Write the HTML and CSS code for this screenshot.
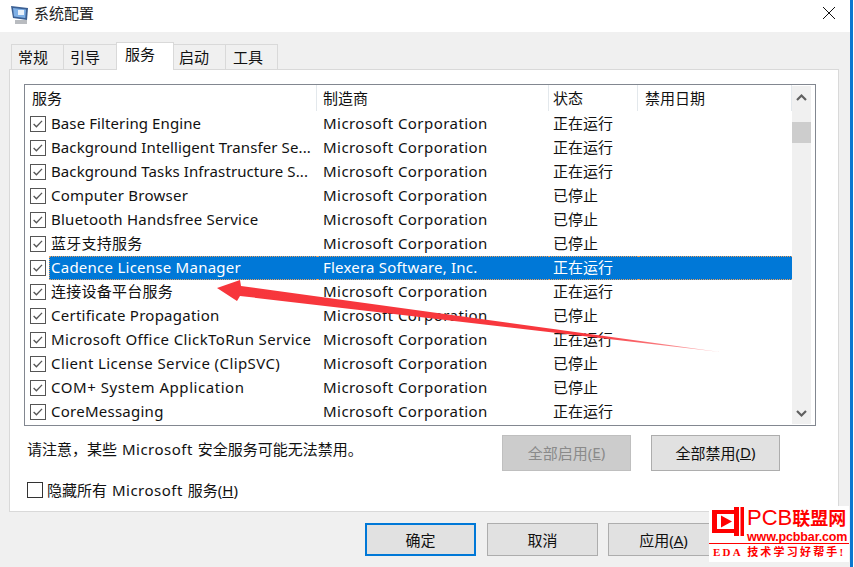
FILE: index.html
```html
<!DOCTYPE html>
<html lang="zh-CN">
<head>
<meta charset="utf-8">
<title>系统配置</title>
<link rel="stylesheet" href="styles.css">
</head>
<body>
<svg width="0" height="0" class="defs"><defs>
<symbol id="chk" viewBox="0 0 16 16"><path d="M3 8 L6.2 11.2 L12.6 4.4" fill="none" stroke="#555" stroke-width="1.5"/></symbol>
</defs></svg>
<div class="window">
  <header class="titlebar">
    <svg class="appicon" width="20" height="22" viewBox="0 0 20 22">
      <rect x="5" y="17" width="12" height="4" fill="#b9bcc0"/>
      <path d="M1 3 L18 5 L17 17 L3 15 Z" fill="#3b5f93"/>
      <path d="M3 5 L16 6.5 L15.3 15 L4 13.5 Z" fill="#7fb0e6"/>
      <rect x="8" y="7" width="6" height="5" fill="#e9f1fb"/>
    </svg>
    <span class="title">系统配置</span>
    <svg class="close" width="12" height="12" viewBox="0 0 12 12"><path d="M0 0 L12 12 M12 0 L0 12" stroke="#111" stroke-width="1" fill="none"/></svg>
  </header>
  <main class="content">
    <nav class="tabs">
      <span class="tab">常规</span>
      <span class="tab">引导</span>
      <span class="tab active">服务</span>
      <span class="tab">启动</span>
      <span class="tab">工具</span>
    </nav>
    <section class="panel">
      <div class="list">
        <div class="table">
          <div class="row head">
            <span class="hc hc1">服务</span><span class="hc hc2">制造商</span><span class="hc hc3">状态</span><span class="hc hc4">禁用日期</span>
          </div>
          <div class="row"><span class="box"><svg><use href="#chk"/></svg></span><span class="name narrow">Base Filtering Engine</span><span class="mfr">Microsoft Corporation</span><span class="st">正在运行</span><span class="dt"></span></div>
          <div class="row"><span class="box"><svg><use href="#chk"/></svg></span><span class="name tight">Background Intelligent Transfer Se...</span><span class="mfr">Microsoft Corporation</span><span class="st">正在运行</span><span class="dt"></span></div>
          <div class="row"><span class="box"><svg><use href="#chk"/></svg></span><span class="name tight">Background Tasks Infrastructure S...</span><span class="mfr">Microsoft Corporation</span><span class="st">正在运行</span><span class="dt"></span></div>
          <div class="row"><span class="box"><svg><use href="#chk"/></svg></span><span class="name">Computer Browser</span><span class="mfr">Microsoft Corporation</span><span class="st">已停止</span><span class="dt"></span></div>
          <div class="row"><span class="box"><svg><use href="#chk"/></svg></span><span class="name">Bluetooth Handsfree Service</span><span class="mfr">Microsoft Corporation</span><span class="st">已停止</span><span class="dt"></span></div>
          <div class="row"><span class="box"><svg><use href="#chk"/></svg></span><span class="name">蓝牙支持服务</span><span class="mfr">Microsoft Corporation</span><span class="st">已停止</span><span class="dt"></span></div>
          <div class="row selected"><span class="box"><svg><use href="#chk"/></svg></span><span class="name">Cadence License Manager</span><span class="mfr">Flexera Software, Inc.</span><span class="st">正在运行</span><span class="dt"></span></div>
          <div class="row"><span class="box"><svg><use href="#chk"/></svg></span><span class="name">连接设备平台服务</span><span class="mfr">Microsoft Corporation</span><span class="st">正在运行</span><span class="dt"></span></div>
          <div class="row"><span class="box"><svg><use href="#chk"/></svg></span><span class="name">Certificate Propagation</span><span class="mfr">Microsoft Corporation</span><span class="st">已停止</span><span class="dt"></span></div>
          <div class="row"><span class="box"><svg><use href="#chk"/></svg></span><span class="name wide">Microsoft Office ClickToRun Service</span><span class="mfr">Microsoft Corporation</span><span class="st">正在运行</span><span class="dt"></span></div>
          <div class="row"><span class="box"><svg><use href="#chk"/></svg></span><span class="name wide">Client License Service (ClipSVC)</span><span class="mfr">Microsoft Corporation</span><span class="st">已停止</span><span class="dt"></span></div>
          <div class="row"><span class="box"><svg><use href="#chk"/></svg></span><span class="name wider">COM+ System Application</span><span class="mfr">Microsoft Corporation</span><span class="st">已停止</span><span class="dt"></span></div>
          <div class="row"><span class="box"><svg><use href="#chk"/></svg></span><span class="name">CoreMessaging</span><span class="mfr">Microsoft Corporation</span><span class="st">正在运行</span><span class="dt"></span></div>
        </div>
        <div class="scrollbar">
          <svg class="arrow" width="19" height="22" viewBox="0 0 19 22"><path d="M5 14 L9.5 9.5 L14 14" fill="none" stroke="#606060" stroke-width="2.2"/></svg>
          <div class="track"><div class="thumb"></div></div>
          <svg class="arrow" width="19" height="22" viewBox="0 0 19 22"><path d="M5 9 L9.5 13.5 L14 9" fill="none" stroke="#606060" stroke-width="2.2"/></svg>
        </div>
      </div>
      <div class="notice">
        <span class="note">请注意，某些 <span class="latin">Microsoft</span> 安全服务可能无法禁用。</span>
        <div class="noticebtns">
          <span class="btn btn-wide disabled">全部启用(<u>E</u>)</span>
          <span class="btn btn-wide">全部禁用(<u>D</u>)</span>
        </div>
      </div>
      <label class="hide"><span class="box2"></span><span>隐藏所有 <span class="latin">Microsoft</span> 服务(<u>H</u>)</span></label>
    </section>
    <footer class="actions">
      <span class="btn btn-foot primary">确定</span>
      <span class="btn btn-foot">取消</span>
      <span class="btn btn-foot btn-last">应用(<u>A</u>)</span>
    </footer>
  </main>
</div>
<svg class="pointer" width="854" height="567" viewBox="0 0 854 567">
  <defs><linearGradient id="fade" x1="217" x2="720" y1="0" y2="0" gradientUnits="userSpaceOnUse">
    <stop offset="0" stop-color="#f7363c"/><stop offset="0.75" stop-color="#f8383e"/><stop offset="1" stop-color="#fbb6b8"/>
  </linearGradient></defs>
  <polygon points="217,288 240,280 241,286 720,352 240,296 237,301" fill="url(#fade)"/>
</svg>
<aside class="stamp">
  <div class="stamp-top">
    <svg class="stamp-logo" width="32" height="29" viewBox="0 0 32 29">
      <path d="M0 3 H22 V0 H27 V29 H22 V26 H0 Z M5 7 V22 H22 V7 Z" fill="#f00" fill-rule="evenodd"/>
      <rect x="28.5" y="0" width="3.5" height="29" fill="#f00"/>
      <path d="M9 8.5 L20 14.5 L9 20.5 Z" fill="#f00"/>
    </svg>
    <div class="stamp-name">
      <span class="stamp-big">PCB<span class="stamp-cjk">联盟网</span></span>
      <span class="stamp-url">www.pcbbar.com</span>
    </div>
  </div>
  <div class="stamp-slogan">EDA 技术学习好帮手!</div>
</aside>
</body>
</html>
```

FILE: styles.css
```css
* { box-sizing: border-box; }
html, body { margin: 0; padding: 0; background: #fff; }
body {
  width: 854px; height: 567px; overflow: hidden; position: relative;
  font-family: "Noto Sans", "Noto Sans CJK SC", sans-serif;
  font-size: 15px; color: #111;
}
.defs { position: absolute; }
.window {
  width: 853px; height: 567px;
  border-right: 3px solid #0a78d0;
  display: flex; flex-direction: column;
  background: #f0f0f0;
}
.titlebar {
  height: 32px; background: #fff;
  display: flex; align-items: center;
  padding: 0 15px 0 10px;
}
.appicon { margin-right: 4px; margin-top: -4px; }
.title { font-size: 15px; line-height: 20px; margin-top: -6px; color: #222; }
.close { margin-left: auto; margin-top: -6px; }
.content { flex: 1; display: flex; flex-direction: column; padding: 11px 0 0 9px; }
.tabs { display: flex; align-items: flex-end; height: 27px; padding-left: 2px; position: relative; z-index: 1; margin-bottom: -1px; }
.tab {
  width: 53px; height: 26px;
  background: #f0f0f0; border: 1px solid #d9d9d9; border-left-width: 0;
  line-height: 23px; font-size: 15px; padding: 1px 0 0 6px;
}
.tab:nth-child(4) { width: 52px; padding-left: 5px; }
.tab:nth-child(5) { width: 52px; padding-left: 7px; }
.tab:first-child { border-left-width: 1px; }
.tab.active {
  width: 58px; height: 28px; background: #fff; border-bottom: 0;
  border-left-width: 1px; margin-left: -1px; line-height: 22px; padding: 0 0 0 8px;
}
.panel {
  width: 830px; height: 443px; background: #fff;
  border: 1px solid #d9d9d9;
  padding: 14px 22px 0 14px;
  display: flex; flex-direction: column;
}
.list {
  width: 792px; height: 342px;
  border: 1px solid #828790;
  display: flex; flex: none;
  padding-right: 2px;
  overflow: hidden;
}
.table { width: 767px; flex: none; }
.row {
  display: grid; grid-template-columns: 24px 268px 232px 89px 154px;
  width: 767px; height: 24px; line-height: 22px; white-space: nowrap;
  align-items: stretch;
}
.row.head { grid-template-columns: 292px 232px 89px 154px; height: 27px; line-height: 26px; }
.hc { height: 26px; padding-left: 6px; border-right: 1px solid #e3e8ec; color: #111; }
.hc1 { padding-left: 7px; }
.hc3 { padding-left: 4px; }
.hc4 { padding-left: 7px; }
.box { display: flex; align-items: center; padding-left: 5px; }
.box svg, .box2 { display: block; width: 16px; height: 16px; border: 1px solid #555; background: #fff; }
.name { padding-left: 2px; letter-spacing: 0.25px; }
.name.tight { letter-spacing: 0.1px; }
.name.narrow { letter-spacing: 0.1px; }
.name.wide { letter-spacing: 0.4px; }
.name.wider { letter-spacing: 0.55px; }
.mfr { padding-left: 6px; letter-spacing: 0.45px; }
.st { padding-left: 4px; }
.latin { letter-spacing: 0.5px; margin: 0 1px; }
.selected .name, .selected .mfr, .selected .st, .selected .dt {
  background: #0078d7; color: #fff; line-height: 20px;
  border-top: 1px dotted #e9a060; border-bottom: 1px dotted #e9a060;
}
.selected .mfr { letter-spacing: 0.2px; }
.selected .name { border-left: 1px dotted #e9a060; padding-left: 1px; }
.scrollbar { width: 19px; flex: none; margin: 1px 0; background: #f0f0f0; display: flex; flex-direction: column; }
.arrow { display: block; flex: none; }
.track { flex: 1; padding-top: 14px; }
.thumb { height: 21px; background: #cdcdcd; }
.notice { display: flex; align-items: flex-start; margin-top: 9px; }
.note { padding: 4px 0 0 3px; line-height: 20px; }
.noticebtns { margin-left: auto; display: flex; gap: 20px; padding-right: 36px; }
.btn {
  display: flex; align-items: center; justify-content: center;
  background: #e1e1e1; border: 1px solid #adadad; font-size: 15px; color: #111;
}
.btn-wide { width: 129px; height: 36px; padding-bottom: 2px; }
.disabled { background: #ccc; border-color: #bfbfbf; color: #8a8a8a; }
.hide { display: flex; align-items: center; margin: 9px 0 0 3px; line-height: 20px; }
.box2 { margin-right: 4px; border-color: #333; }
.actions { display: flex; gap: 11px; padding: 11px 0 0 356px; }
.btn-foot { width: 111px; height: 33px; }
.btn-last { margin-left: -1px; }
.primary { border: 2px solid #0078d7; }
.pointer { position: absolute; left: 0; top: 0; pointer-events: none; }
.stamp {
  position: absolute; left: 709px; top: 506px; width: 140px; height: 56px;
  background: #fff; color: #f00; padding: 0 0 0 3px;
  font-family: "Liberation Sans", "Noto Sans CJK SC", sans-serif;
}
.stamp-top { display: flex; height: 37px; align-items: flex-start; padding-top: 1px; }
.stamp-logo { flex: none; margin-right: 3px; }
.stamp-name { display: flex; flex-direction: column; }
.stamp-big { font-size: 22px; line-height: 21px; white-space: nowrap; }
.stamp-cjk { font-size: 18px; font-weight: 700; }
.stamp-url { font-size: 12.5px; line-height: 14px; font-weight: 700; white-space: nowrap; letter-spacing: -0.15px; }
.stamp-slogan {
  margin-left: -3px; border-top: 1px solid #f00; height: 18px;
  font-family: "Liberation Serif", "Noto Sans CJK SC", serif; font-size: 11px; line-height: 17px; font-weight: 700;
  letter-spacing: 2.2px; padding-left: 4px; white-space: nowrap;
}
```
